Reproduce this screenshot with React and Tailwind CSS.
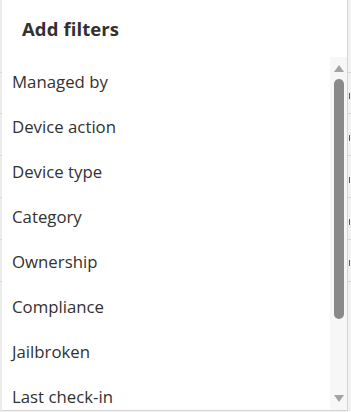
import React from 'react';

const filters = [
    'Managed by',
    'Device action',
    'Device type',
    'Category',
    'Ownership',
    'Compliance',
    'Jailbroken',
    'Last check-in',
];

// lines of the table behind the panel
const bgLines = [72, 113, 155, 197, 239, 281];
const bgMarks = [93, 135, 177, 219, 260];

const Backdrop = ({ side }) => (
    <div className={side === 'left' ? 'relative w-[2px] h-full bg-[#ececec]' : 'relative w-[3px] h-full bg-[#f2f2f2]'}>
        {bgLines.map(y => (
            <div key={y} className="absolute left-0 right-0 h-px bg-[#d8d8d8]" style={{ top: y }} />
        ))}
        {side === 'right' && bgMarks.map(y => (
            <div key={y} className="absolute left-[1px] w-[1px] h-[6px] bg-[#5a5a6a]" style={{ top: y }} />
        ))}
    </div>
);

export default function App() {
    return (
        <div className="w-[351px] h-[412px] flex bg-[#f2f2f2] overflow-hidden" style={{ fontFamily: '"Open Sans", "Noto Sans", sans-serif' }}>
            <Backdrop side="left" />
            <div className="w-[346px] h-[411px] bg-white border-r border-b border-[#d4d4d4] flex flex-col">
                <div className="h-[57px] shrink-0 pl-[20px] flex items-center">
                    <h2 className="text-[18.5px] font-bold text-[#323130] tracking-[0.1px]">Add filters</h2>
                </div>
                <div className="flex-1 flex min-h-0">
                    <ul className="flex-1 overflow-hidden pt-[2px]">
                        {filters.map(f => (
                            <li key={f} className="h-[45px] shrink-0 flex items-center pl-[10px] text-[16.8px] text-[#323130]">
                                {f}
                            </li>
                        ))}
                    </ul>
                    {/* 스크롤바 */}
                    <div className="w-[17px] shrink-0 bg-[#f7f7f7] flex flex-col items-center py-[8px]">
                        <svg width="10" height="7" viewBox="0 0 10 7" className="shrink-0 ml-[1px]">
                            <polygon points="5,0 10,7 0,7" fill="#a3a3a3" />
                        </svg>
                        <div className="w-[10px] h-[240px] mt-[7px] rounded-full bg-[#8a8a8a] ml-[1px]" />
                        <div className="flex-1" />
                        <svg width="10" height="7" viewBox="0 0 10 7" className="shrink-0 ml-[1px]">
                            <polygon points="0,0 10,0 5,7" fill="#a3a3a3" />
                        </svg>
                    </div>
                </div>
            </div>
            <Backdrop side="right" />
        </div>
    );
}
